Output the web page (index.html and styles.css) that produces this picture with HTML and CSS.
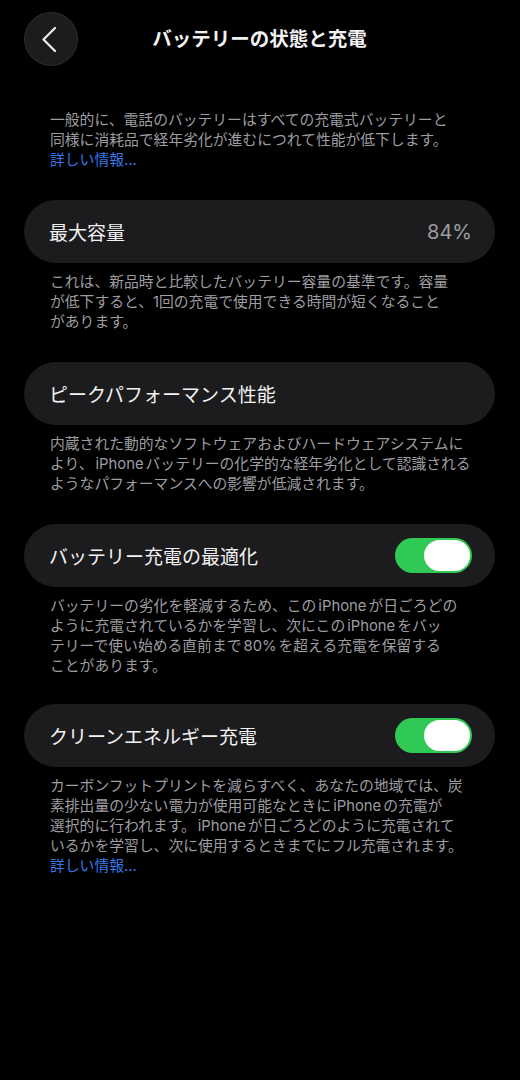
FILE: index.html
```html
<!DOCTYPE html>
<html lang="ja">
<head>
<meta charset="utf-8">
<title>バッテリーの状態と充電</title>
<link rel="stylesheet" href="styles.css">
</head>
<body>
<div class="page">
  <header class="nav">
    <button class="back" aria-label="戻る">
      <svg width="54" height="54" viewBox="0 0 54 54" aria-hidden="true">
        <path d="M31 16 L19.5 27.5 L31 39" fill="none" stroke="#ececec" stroke-width="2.3" stroke-linecap="round" stroke-linejoin="round"/>
      </svg>
    </button>
    <h1 class="nav-title">バッテリーの状態と充電</h1>
    <span class="nav-spacer"></span>
  </header>

  <p class="intro">一般的に、電話のバッテリーはすべての充電式バッテリーと<br>同様に消耗品で経年劣化が進むにつれて性能が低下します。<br><a class="link" href="#">詳しい情報...</a></p>

  <section class="group">
    <div class="card">
      <span class="label">最大容量</span>
      <span class="value">84%</span>
    </div>
    <p class="note">これは、新品時と比較したバッテリー容量の基準です。容量<br>が低下すると、1回の充電で使用できる時間が短くなること<br>があります。</p>
  </section>

  <section class="group">
    <div class="card">
      <span class="label">ピークパフォーマンス性能</span>
    </div>
    <p class="note">内蔵された動的なソフトウェアおよびハードウェアシステムに<br>より、<span class="en">iPhone</span>バッテリーの化学的な経年劣化として認識される<br>ようなパフォーマンスへの影響が低減されます。</p>
  </section>

  <section class="group">
    <div class="card">
      <span class="label">バッテリー充電の最適化</span>
      <span class="switch on"><span class="knob"></span></span>
    </div>
    <p class="note">バッテリーの劣化を軽減するため、この<span class="en">iPhone</span>が日ごろどの<br>ように充電されているかを学習し、次にこの<span class="en">iPhone</span>をバッ<br>テリーで使い始める直前まで<span class="en">80%</span>を超える充電を保留する<br>ことがあります。</p>
  </section>

  <section class="group group-last">
    <div class="card">
      <span class="label">クリーンエネルギー充電</span>
      <span class="switch on"><span class="knob"></span></span>
    </div>
    <p class="note">カーボンフットプリントを減らすべく、あなたの地域では、炭<br>素排出量の少ない電力が使用可能なときに<span class="en">iPhone</span>の充電が<br>選択的に行われます。<span class="en">iPhone</span>が日ごろどのように充電されて<br>いるかを学習し、次に使用するときまでにフル充電されます。<br><a class="link" href="#">詳しい情報...</a></p>
  </section>
</div>
</body>
</html>
```

FILE: styles.css
```css
html, body {
  margin: 0;
  background: #000;
}

body {
  font-family: "Inter", "Noto Sans CJK JP", sans-serif;
  color: #fff;
  -webkit-font-smoothing: antialiased;
}

.page {
  padding: 12px 25px 40px 24px;
}

/* top bar: round back button + centred title */
.nav {
  display: grid;
  grid-template-columns: 54px 1fr 54px;
  align-items: center;
  height: 54px;
}

.back {
  width: 54px;
  height: 54px;
  padding: 0;
  border-radius: 50%;
  border: 1px solid rgba(255, 255, 255, 0.07);
  background: #1c1c1e;
  display: flex;
  align-items: center;
  justify-content: center;
  box-sizing: border-box;
}

.back svg {
  display: block;
  flex: none;
}

.nav-title {
  margin: 0;
  text-align: center;
  font-size: 19.5px;
  font-weight: 700;
  line-height: 54px;
  color: #f2f2f2;
}

/* explanatory paragraphs */
.intro,
.note {
  margin: 0;
  padding-left: 26px;
  font-size: 14.8px;
  line-height: 20px;
  color: #9d9da2;
  white-space: nowrap;
}

.intro {
  margin-top: 44px;
}

.note {
  margin-top: 9px;
}

.en {
  margin: 0 2px;
}

.link {
  color: #3479e6;
  text-decoration: none;
}

/* settings rows */
.group {
  margin-top: 30px;
}

.group-last {
  margin-top: 28px;
}

.card {
  display: flex;
  align-items: center;
  justify-content: space-between;
  height: 63px;
  padding: 0 23px 0 25px;
  border-radius: 32px;
  background: #1c1c1e;
}

.label {
  font-size: 19px;
  color: #f2f2f2;
}

.value {
  font-size: 20px;
  color: #9d9da2;
  margin-right: 0;
}

/* toggle switch */
.switch {
  display: flex;
  align-items: center;
  width: 77px;
  height: 35px;
  padding: 2px;
  box-sizing: border-box;
  border-radius: 18px;
  background: #3a3a3c;
}

.switch.on {
  background: #30c956;
  justify-content: flex-end;
}

.knob {
  width: 46px;
  height: 31px;
  border-radius: 16px;
  background: #fff;
}
```
